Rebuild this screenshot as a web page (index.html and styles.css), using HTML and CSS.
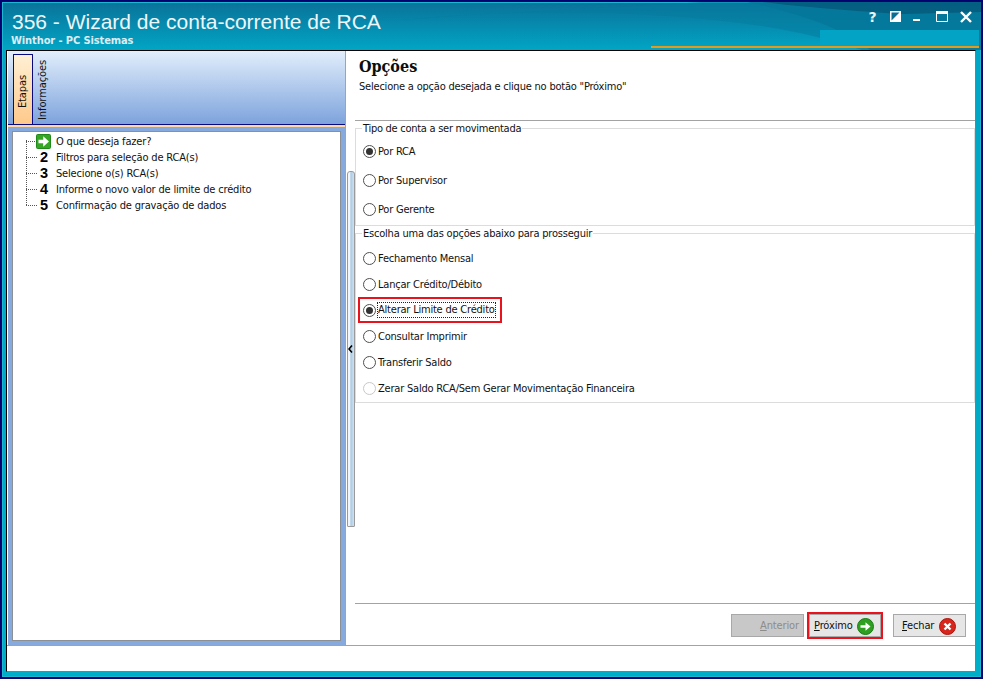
FILE: index.html
```html
<!DOCTYPE html>
<html lang="pt">
<head>
<meta charset="utf-8">
<title>356 - Wizard de conta-corrente de RCA</title>
<link rel="stylesheet" href="styles.css">
</head>
<body>
<div class="window">
  <header class="titlebar">
    <svg class="swoosh" width="979" height="48" viewBox="0 0 979 48" aria-hidden="true">
      <path d="M640 0H979V48H868C845 28 800 12 745 0Z" fill="#046f92" opacity=".75"/>
      <path d="M400 18C520 6 650 8 760 24C800 30 835 40 860 48H979V0H700C610 6 500 10 400 18Z" fill="#057c9f" opacity=".55"/>
      <path d="M760 0C810 6 870 10 900 12L979 10V0Z" fill="#04597a" opacity=".8"/>
      <rect x="818" y="28" width="159" height="16" fill="#02a3c4"/>
      <rect x="649" y="44" width="328" height="2" fill="#e59a1c"/>
    </svg>
    <div class="titles">
      <h1 class="title">356 - Wizard de conta-corrente de RCA</h1>
      <div class="subtitle">Winthor - PC Sistemas</div>
    </div>
    <div class="controls">
      <span class="help">?</span>
      <svg width="11" height="11" viewBox="0 0 11 11" aria-hidden="true"><rect width="11" height="11" fill="#fff"/><path d="M9.5 1.5H1.5V9.5Z" fill="#0a6f90"/></svg>
      <svg width="8" height="11" viewBox="0 0 8 11" aria-hidden="true"><rect x="1" y="8" width="7" height="2" fill="#fff"/></svg>
      <svg class="ctl-max" width="12" height="11" viewBox="0 0 12 11" aria-hidden="true"><path d="M.5 .5H11.5V10.5H.5Z" fill="none" stroke="#fff"/><rect width="12" height="3" fill="#fff"/></svg>
      <svg width="12" height="12" viewBox="0 0 12 12" aria-hidden="true"><path d="M1 1L11 11M11 1L1 11" stroke="#fff" stroke-width="2.4" fill="none"/></svg>
    </div>
  </header>

  <div class="panel">
    <div class="main">
      <aside class="left">
        <div class="tabbar">
          <div class="tab tab-active"><span class="tab-text">Etapas</span></div>
          <div class="tab"><span class="tab-text">Informações</span></div>
        </div>
        <div class="tabline"></div>
        <ul class="tree">
          <li class="step">
            <span class="step-mark">
              <svg class="step-go" width="15" height="15" viewBox="0 0 15 15" aria-hidden="true"><rect x=".5" y=".5" width="14" height="14" rx="1" fill="#37a624" stroke="#1f8a18"/><path d="M2.5 5.8H7.2V2.2L13 7.5L7.2 12.8V9.2H2.5Z" fill="#fff"/></svg>
            </span>O que deseja fazer?
          </li>
          <li class="step"><span class="step-mark">2</span>Filtros para seleção de RCA(s)</li>
          <li class="step"><span class="step-mark">3</span>Selecione o(s) RCA(s)</li>
          <li class="step"><span class="step-mark">4</span>Informe o novo valor de limite de crédito</li>
          <li class="step"><span class="step-mark">5</span>Confirmação de gravação de dados</li>
        </ul>
      </aside>

      <div class="splitter">
        <div class="grip"></div>
        <svg class="chevron" width="5" height="8" viewBox="0 0 5 8" aria-hidden="true"><path d="M4 .5L1 4L4 7.5" fill="none" stroke="#000" stroke-width="1.6"/></svg>
      </div>

      <section class="right">
        <div class="head">
          <h2 class="head-title">Opções</h2>
          <p class="head-text">Selecione a opção desejada e clique no botão "Próximo"</p>
        </div>

        <div class="group group-a">
          <div class="legend">Tipo de conta a ser movimentada</div>
          <div class="opt"><span class="radio on"></span>Por RCA</div>
          <div class="opt"><span class="radio"></span>Por Supervisor</div>
          <div class="opt"><span class="radio"></span>Por Gerente</div>
        </div>

        <div class="group group-b">
          <div class="legend">Escolha uma das opções abaixo para prosseguir</div>
          <div class="opt"><span class="radio"></span>Fechamento Mensal</div>
          <div class="opt"><span class="radio"></span>Lançar Crédito/Débito</div>
          <div class="opt opt-marked"><span class="radio on"></span><span class="focus">Alterar Limite de Crédito</span></div>
          <div class="opt"><span class="radio"></span>Consultar Imprimir</div>
          <div class="opt"><span class="radio"></span>Transferir Saldo</div>
          <div class="opt"><span class="radio off"></span>Zerar Saldo RCA/Sem Gerar Movimentação Financeira</div>
        </div>

        <div class="spacer"></div>

        <div class="actions">
          <button class="btn btn-off" type="button"><span><u>A</u>nterior</span></button>
          <button class="btn btn-next" type="button"><span><u>P</u>róximo</span>
            <svg width="17" height="17" viewBox="0 0 17 17" aria-hidden="true"><circle cx="8.5" cy="8.5" r="8" fill="#2f9f22" stroke="#1b7a16"/><path d="M3.5 7.3H8.5V4.2L13.5 8.5L8.5 12.8V9.7H3.5Z" fill="#fff"/></svg>
          </button>
          <button class="btn btn-close" type="button"><span><u>F</u>echar</span>
            <svg width="17" height="17" viewBox="0 0 17 17" aria-hidden="true"><circle cx="8.5" cy="8.5" r="8" fill="#d8261c" stroke="#a8150f"/><path d="M5.5 5.5L11.5 11.5M11.5 5.5L5.5 11.5" stroke="#fff" stroke-width="2.4" fill="none"/></svg>
          </button>
        </div>
      </section>
    </div>
    <div class="status"></div>
  </div>
</div>
</body>
</html>
```
FILE: styles.css
```css
*, *::before, *::after { box-sizing: border-box; }
html, body { margin: 0; padding: 0; background: #fff; overflow: hidden; }
body { font-family: "DejaVu Sans Condensed", "DejaVu Sans", sans-serif; font-size: 11px; color: #111; letter-spacing: -.21px; }

.window {
  width: 983px; height: 679px;
  border: 2px solid #03036f;
  display: flex; flex-direction: column;
  background: linear-gradient(to bottom, #0a7299 0, #01a5c5 48px, #00aec9 100%);
  box-shadow: inset 0 0 0 1px #1ab6d2;
}

.titlebar { height: 48px; flex: none; position: relative; display: flex; justify-content: space-between; }
.swoosh { position: absolute; left: 0; top: 0; }
.titles { position: relative; padding: 8px 0 0 10px; }
.title { margin: 0; font: normal 21px/24px "Liberation Sans", sans-serif; color: #eef6f9; letter-spacing: 0; white-space: nowrap; }
.subtitle { font: bold 11px/14px "DejaVu Sans Condensed", sans-serif; color: #dcecf2; margin: 0 0 0 -1px; letter-spacing: -.1px; }
.controls { position: relative; display: flex; gap: 11px; align-items: flex-start; padding: 9px 9px 0 0; }
.ctl-max { margin-left: 5px; margin-right: 1px; }
.help { font: bold 14px/13px "DejaVu Sans", sans-serif; color: #eaf4f7; width: 13px; text-align: center; }

.panel {
  flex: 1; margin: 0 5px 5px 4px;
  border: 1px solid #000; border-right-color: #7c7c7c; border-bottom-color: #7c7c7c;
  background: #fff; display: flex; flex-direction: column; min-height: 0;
}
.main { height: 595px; flex: none; display: flex; border-bottom: 1px solid #a3a3a3; }
.status { flex: 1; background: #fff; }

.left {
  width: 338px; flex: none; margin-left: 1px;
  border-right: 1px solid #a3a3a3;
  background: #86a9de; padding: 0 4px 4px 0;
  display: flex; flex-direction: column;
}
.tabbar {
  height: 73px; flex: none; margin-right: -4px;
  background: linear-gradient(to bottom, #e2eefc, #7da3dc);
  display: flex; align-items: flex-end; padding-left: 5px;
}
.tab { width: 20px; height: 70px; display: flex; align-items: center; justify-content: center; padding-top: 2px; }
.tab-active {
  border: 1px solid #0a0a80; border-bottom: 0; border-radius: 1px 1px 0 0;
  background: linear-gradient(to bottom, #fff0d4, #fec98a);
  padding-top: 4px;
}
.tab-text { writing-mode: vertical-rl; transform: rotate(180deg); font-size: 11px; line-height: 14px; white-space: nowrap; color: #111; letter-spacing: -.1px; }
.tabline { height: 3px; flex: none; margin-right: -4px; background: #ffd9a6; border-top: 1px solid #0a0a80; }

.tree {
  list-style: none; margin: 4px 0 0 4px; padding: 1px 0 0 0; flex: 1;
  background: #fff; border: 1px solid #8b8f96; position: relative;
  letter-spacing: -.17px;
}
.tree::before {
  content: ""; position: absolute; left: 13px; top: 8px; height: 65px;
  border-left: 1px dotted #555;
}
.step { height: 16px; display: flex; align-items: center; padding-left: 24px; position: relative; white-space: nowrap; }
.step::before {
  content: ""; position: absolute; left: 13px; top: 8px; width: 11px;
  border-top: 1px dotted #555;
}
.step-mark {
  width: 19px; flex: none; height: 16px;
  display: flex; align-items: center; justify-content: flex-start;
  font: bold 14.5px/16px "Liberation Sans", sans-serif; color: #000; text-indent: 3px;
}
.step-go { margin-left: -1px; flex: none; }

.splitter { width: 9px; flex: none; position: relative; background: #fff; }
.grip {
  position: absolute; left: 1px; top: 120px; width: 8px; height: 356px;
  border: 1px solid #9a9a9a; border-radius: 3px 3px 1px 1px;
  background: linear-gradient(to right, #f2f6fa 0, #f2f6fa 35%, #a9c9e2 45%, #cfe2ef 100%);
}
.chevron { position: absolute; left: 2px; top: 294px; }

.right { flex: 1; min-width: 0; display: flex; flex-direction: column; }
.head { height: 70px; flex: none; padding: 6px 0 0 4px; border-bottom: 1px solid #a3a3a3; }
.head-title { margin: 0; font: bold 16px/20px "DejaVu Serif Condensed", "DejaVu Serif", serif; color: #0d0d0d; letter-spacing: 0; }
.head-text { margin: 3px 0 0; font-size: 11px; line-height: 14px; }

.group { border: 1px solid #dcdcdc; }
.group-a { margin-top: 7px; padding-bottom: 1px; }
.group-a .opt { height: 29px; }
.group-a .legend { margin-bottom: 1px; letter-spacing: -.27px; }
.group-b { margin-top: 7px; padding-bottom: 1px; }
.group-b .opt { height: 26px; }
.group-b .legend { margin-bottom: 4px; }
.legend {
  width: fit-content; margin-top: -7px; margin-left: 6px; padding: 0 1px;
  height: 14px; line-height: 14px; background: #fff; font-size: 11px;
}
.opt { display: flex; align-items: center; padding-left: 7px; white-space: nowrap; position: relative; font-size: 11px; }
.radio {
  width: 13px; height: 13px; flex: none; margin-right: 2px;
  border: 1px solid #4f4f4f; border-radius: 50%; background: #fff;
  display: flex; align-items: center; justify-content: center;
}
.radio.on::after { content: ""; width: 7px; height: 7px; border-radius: 50%; background: #333; }
.radio.off { border-color: #c8c8c8; }
.opt-marked::after {
  content: ""; position: absolute; left: 2px; top: 0; width: 144px; height: 26px;
  border: 2px solid #e8131c; pointer-events: none;
}
.focus { outline: 1px dotted #222; line-height: 14px; }

.spacer { flex: 1; }
.actions {
  height: 42px; flex: none; border-top: 1px solid #a3a3a3;
  display: flex; align-items: flex-start; justify-content: flex-end;
  padding: 10px 9px 0 0; gap: 5px;
}
.btn {
  height: 23px; width: 73px; margin: 0;
  border: 1px solid #a8a8a8; background: #e6e6e6; color: #111;
  font: 11px/14px "DejaVu Sans Condensed", sans-serif; letter-spacing: -.12px;
  display: flex; align-items: center; justify-content: space-between;
  padding: 1px 9px 0 8px;
}
.btn-off { background: #c8c8c8; color: #8c8c8c; justify-content: flex-end; padding-right: 4px; }
.btn-next { width: 72px; padding-left: 4px; padding-right: 6px; outline: 2px solid #e8131c; margin-right: 7px; }
```
